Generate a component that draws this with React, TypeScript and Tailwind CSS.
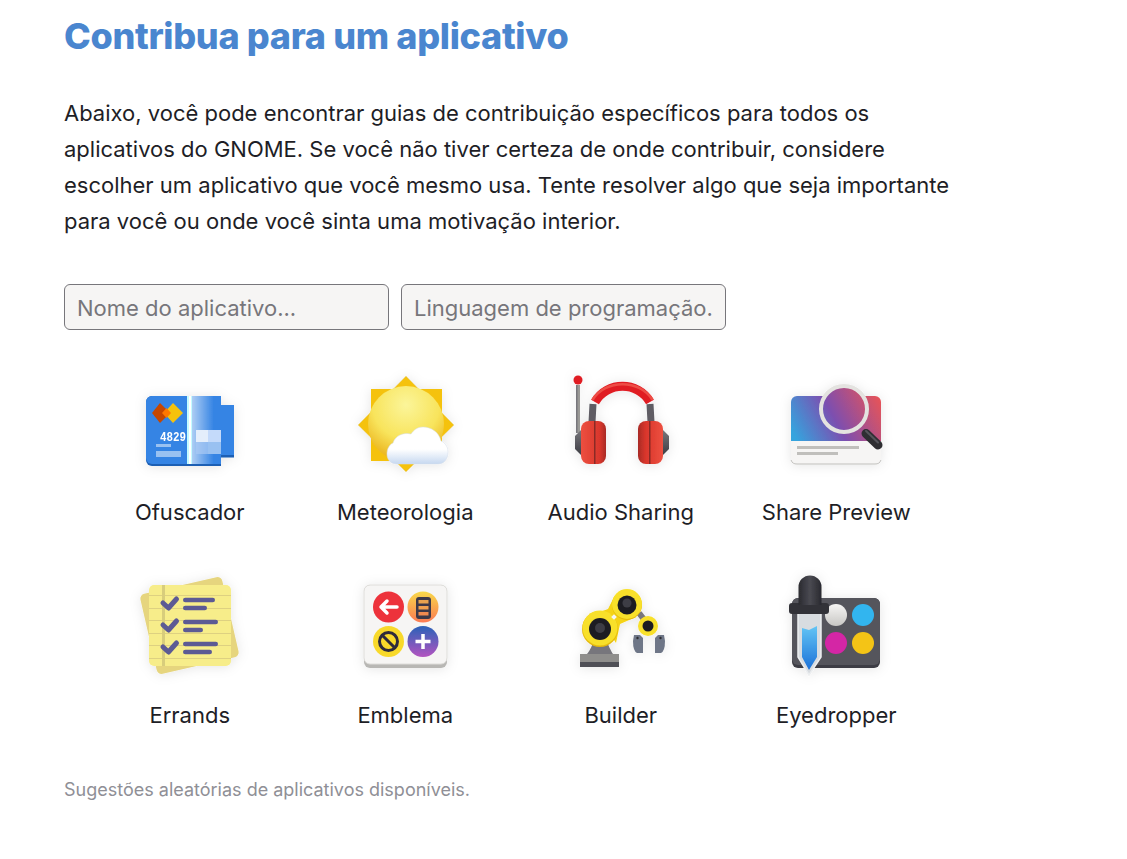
import React from "react";

const Soft = ({ children }: { children: React.ReactNode }) => (
  <svg width="120" height="120" viewBox="0 0 120 120" className="block">
    <defs>
      <filter id="soft" x="-30%" y="-30%" width="160%" height="160%">
        <feDropShadow dx="0" dy="1" stdDeviation="6" floodColor="#000" floodOpacity="0.10" />
      </filter>
      <linearGradient id="fade" x1="0" x2="1" y1="0" y2="0">
        <stop offset="0" stopColor="#fff" stopOpacity="0.6" />
        <stop offset="0.75" stopColor="#fff" stopOpacity="0" />
      </linearGradient>
      <radialGradient id="sun" cx="0.5" cy="0.25" r="0.8">
        <stop offset="0" stopColor="#fbf59a" />
        <stop offset="0.55" stopColor="#f8e45c" />
        <stop offset="1" stopColor="#e8a90f" />
      </radialGradient>
      <linearGradient id="cloud" x1="0" x2="0" y1="0" y2="1">
        <stop offset="0.6" stopColor="#ffffff" />
        <stop offset="1" stopColor="#c6d8f0" />
      </linearGradient>
      <linearGradient id="cup" x1="0" x2="1" y1="0" y2="0">
        <stop offset="0" stopColor="#ed5040" />
        <stop offset="0.75" stopColor="#d9362c" />
        <stop offset="1" stopColor="#a82a25" />
      </linearGradient>
      <linearGradient id="cup2" x1="0" x2="1" y1="0" y2="0">
        <stop offset="0" stopColor="#a82a25" />
        <stop offset="0.3" stopColor="#d9362c" />
        <stop offset="1" stopColor="#ed5040" />
      </linearGradient>
      <linearGradient id="steel" x1="0" x2="0" y1="0" y2="1">
        <stop offset="0" stopColor="#77767b" />
        <stop offset="1" stopColor="#3d3d44" />
      </linearGradient>
      <linearGradient id="preview" gradientUnits="userSpaceOnUse" x1="20" y1="75" x2="105" y2="30">
        <stop offset="0" stopColor="#35a4de" />
        <stop offset="0.45" stopColor="#7c4fb0" />
        <stop offset="1" stopColor="#ed5353" />
      </linearGradient>
      <linearGradient id="orangey" x1="0" x2="0" y1="0" y2="1">
        <stop offset="0" stopColor="#f8d84a" />
        <stop offset="1" stopColor="#fb7a52" />
      </linearGradient>
      <linearGradient id="bluepurple" x1="0" x2="0" y1="0" y2="1">
        <stop offset="0" stopColor="#2a62b8" />
        <stop offset="1" stopColor="#b354c0" />
      </linearGradient>
      <linearGradient id="drop" x1="0" x2="0" y1="0" y2="1">
        <stop offset="0" stopColor="#62c5f5" />
        <stop offset="1" stopColor="#1c71d8" />
      </linearGradient>
      <linearGradient id="bulb" x1="0" x2="1" y1="0" y2="0">
        <stop offset="0" stopColor="#2a2a30" />
        <stop offset="0.5" stopColor="#4a4a52" />
        <stop offset="1" stopColor="#28282e" />
      </linearGradient>
      <linearGradient id="white" x1="0" x2="0" y1="0" y2="1">
        <stop offset="0" stopColor="#f6f5f4" />
        <stop offset="1" stopColor="#c8c7c4" />
      </linearGradient>
    </defs>
    <g filter="url(#soft)">{children}</g>
  </svg>
);

const Ofuscador = () => (
  <Soft>
    <rect x="85" y="41" width="19" height="52" fill="#3584e4" />
    <rect x="85" y="91" width="19" height="2.500" fill="#1a5fb4" />
    <path d="M22 32H91V102H22a6 6 0 0 1-6-6V38a6 6 0 0 1 6-6Z" fill="#1a5fb4" />
    <path d="M22 32H91V100H22a6 6 0 0 1-6-6V38a6 6 0 0 1 6-6Z" fill="#3584e4" />
    <rect x="62" y="32" width="29" height="68" fill="url(#fade)" />
    <rect x="57" y="32" width="5" height="68" fill="#c5fbff" />
    <rect x="59" y="32" width="2" height="68" fill="#ffffff" />
    <path d="M30 39 40 49 30 59 22 49Z" fill="#c64600" />
    <path d="M43 39 53 49 43 59 34 49Z" fill="#f5c211" />
    <path d="M36.500 44 41 49 36.500 54 32 49Z" fill="#ff7800" />
    <text x="30" y="77" fill="#fff" fontSize="12" fontWeight="700" fontFamily="'Liberation Mono', monospace" textLength="26" lengthAdjust="spacingAndGlyphs">4829</text>
    <rect x="26" y="80" width="15" height="3" fill="#99c1f1" />
    <rect x="26" y="87" width="25" height="6" fill="#99c1f1" />
    <rect x="66" y="66" width="12" height="12" fill="#e4eefb" />
    <rect x="78" y="66" width="13" height="12" fill="#c4dafa" />
    <rect x="78" y="78" width="13" height="12" fill="#99c1f1" />
    <rect x="66" y="78" width="12" height="12" fill="#a9c9f3" opacity="0.7" />
  </Soft>
);

const Meteorologia = () => (
  <Soft>
    <rect x="26" y="25" width="71" height="72" fill="#f5c211" />
    <path d="M61 12 109 61 61 108 13 61Z" fill="#f5c211" stroke="#e5d9a0" strokeWidth="0.500" />
    <circle cx="61" cy="60" r="38" fill="url(#sun)" />
    <path d="M52 100H93C100 100 103 94 103 88 103 82 99 78 96 77 94 68 86 63 78 63 72 63 69 66 66 70 58 68 50 72 48 79 44 81 42 85 42 90 42 96 46 100 52 100Z" fill="url(#cloud)" stroke="#d4dde8" strokeWidth="0.500" />
  </Soft>
);

const AudioSharing = () => (
  <Soft>
    <rect x="15" y="21" width="4" height="48" fill="#9a9996" />
    <rect x="15" y="21" width="1.500" height="48" fill="#77767b" />
    <circle cx="17" cy="16" r="4.500" fill="#e01b24" />
    <path d="M14 72 20 66V91L14 85Z" fill="url(#steel)" />
    <path d="M102 66 108 72V85L102 91Z" fill="url(#steel)" />
    <path d="M32 40 31 58M89 40 90 58" fill="none" stroke="#5e5c64" strokeWidth="7" />
    <path d="M34 38C46 17 77 17 89 38" fill="none" stroke="#e01b24" strokeWidth="9" />
    <path d="M31.500 36C44 15 79 15 91.500 36" fill="none" stroke="#ed4d45" strokeWidth="2.500" />
    <rect x="20" y="57" width="25" height="43" rx="8" fill="url(#cup)" />
    <rect x="33" y="57" width="1.500" height="43" fill="#8a2a26" />
    <rect x="77" y="57" width="25" height="43" rx="8" fill="url(#cup2)" />
    <rect x="88" y="57" width="1.500" height="43" fill="#8a2a26" />
  </Soft>
);

const SharePreview = () => (
  <Soft>
    <path d="M21 32H99a6 6 0 0 1 6 6V77H15V38a6 6 0 0 1 6-6Z" fill="url(#preview)" />
    <path d="M15 77H105V94a6 6 0 0 1-6 6H21a6 6 0 0 1-6-6Z" fill="#f6f5f4" />
    <path d="M15 96a6 6 0 0 0 6 4H99a6 6 0 0 0 6-4" fill="none" stroke="#c0bfbc" strokeWidth="1" />
    <rect x="21" y="82" width="62" height="3" fill="#c0bfbc" />
    <rect x="21" y="88" width="41" height="3" fill="#c0bfbc" />
    <circle cx="68" cy="45" r="23" fill="url(#preview)" stroke="#e4e3e0" strokeWidth="4" />
    <path d="M90 69.500 102 81" stroke="#2e2e33" strokeWidth="9" strokeLinecap="round" />
    <path d="M90 67 102 78.500" stroke="#55555b" strokeWidth="2" strokeLinecap="round" />
  </Soft>
);

const Errands = () => {
  const rows = [
    { c: 37, y1: 33, y2: 41, a: 32, b: 24 },
    { c: 59, y1: 55, y2: 63, a: 35, b: 20 },
    { c: 81, y1: 77, y2: 85, a: 35, b: 29 },
  ];
  return (
    <Soft>
      <rect x="17.500" y="17.500" width="84" height="82" rx="5" fill="#e6d57e" transform="rotate(-13 59.500 58.500)" />
      <rect x="19" y="18" width="82" height="81" rx="5" fill="#f7ed8a" />
      {[28, 41, 53, 66, 78, 91].map((y) => (
        <rect key={y} x="19" y={y} width="82" height="1" fill="#ded181" />
      ))}
      <rect x="32" y="18" width="3" height="81" fill="#d8cd7c" />
      {rows.map((r) => (
        <g key={r.c}>
          <path d={`M33 ${r.c - 1}l5.500 5 8-9`} fill="none" stroke="#5b5a94" strokeWidth="5" strokeLinecap="round" strokeLinejoin="round" />
          <rect x="53" y={r.y1 - 2.250} width={r.a} height="4.500" rx="2.250" fill="#5b5a94" />
          <rect x="53" y={r.y2 - 2.250} width={r.b} height="4.500" rx="2.250" fill="#5b5a94" />
        </g>
      ))}
    </Soft>
  );
};

const Emblema = () => (
  <Soft>
    <rect x="19" y="18" width="83" height="83" rx="6" fill="#b8b7b4" />
    <rect x="19" y="18" width="83" height="79" rx="6" fill="#f6f5f4" stroke="#deddda" strokeWidth="1" />
    <circle cx="43.500" cy="40" r="15.500" fill="#ed333b" />
    <path d="M52 40H36M42 34l-6 6 6 6" fill="none" stroke="#fff" strokeWidth="3.500" strokeLinecap="round" strokeLinejoin="round" />
    <circle cx="78" cy="40" r="15.500" fill="url(#orangey)" />
    <rect x="71" y="30" width="15" height="22" rx="3" fill="#3d3846" />
    <rect x="73.500" y="33" width="10" height="3.500" fill="#e8a24f" />
    <rect x="73.500" y="39" width="10" height="3.500" fill="#f0a050" />
    <rect x="73.500" y="45" width="10" height="3.500" fill="#f08a50" />
    <circle cx="43.500" cy="74.500" r="15.500" fill="#f8d92c" />
    <circle cx="43.500" cy="74.500" r="9" fill="none" stroke="#2d2b3a" strokeWidth="3" />
    <path d="M37 68 50 81" stroke="#2d2b3a" strokeWidth="3" />
    <circle cx="78" cy="74.500" r="15.500" fill="url(#bluepurple)" />
    <path d="M78 67V82M70.500 74.500H85.500" stroke="#fff" strokeWidth="3.500" />
  </Soft>
);

const Builder = () => (
  <Soft>
    <path d="M26 87C30 82 31 78 33 74H46C47 78 50 84 52 87Z" fill="#77767b" />
    <rect x="19" y="87" width="39" height="8" fill="#8f8e8c" />
    <rect x="19" y="95" width="39" height="5" fill="#4f4f56" />
    <path d="M78 46 85 55" stroke="#77767b" strokeWidth="6" />
    <path d="M36 46 47 42 53 30 75 50 59 57 55 76Z" fill="#f5d313" />
    <circle cx="39" cy="62" r="18" fill="#e5b90e" />
    <circle cx="39" cy="61" r="17.500" fill="#f8e02a" />
    <circle cx="39" cy="62" r="11" fill="#1f1f24" />
    <circle cx="39" cy="61" r="5" fill="#3d3d44" />
    <circle cx="66" cy="38" r="15" fill="#e5b90e" />
    <circle cx="66" cy="37" r="15" fill="#f8e02a" />
    <circle cx="66" cy="38" r="9.500" fill="#1f1f24" />
    <circle cx="66" cy="36" r="4.500" fill="#3d3d44" />
    <rect x="51" y="48" width="4" height="4" fill="#f6f5f4" transform="rotate(45 53 50)" />
    <path d="M73 68h6l3 3v15h-6Q72 84 72 74Z" fill="#6e7687" />
    <path d="M103 68h-6l-3 3v15h6Q104 84 104 74Z" fill="#6e7687" />
    <circle cx="76.500" cy="71" r="1.200" fill="#2e2e33" />
    <circle cx="99.500" cy="71" r="1.200" fill="#2e2e33" />
    <circle cx="87" cy="59" r="10" fill="#f8e02a" />
    <circle cx="87" cy="59" r="5.500" fill="#1f1f24" />
  </Soft>
);

const Eyedropper = () => (
  <Soft>
    <rect x="16" y="31" width="88" height="70" rx="6" fill="#3d3d44" />
    <rect x="16" y="31" width="88" height="67" rx="6" fill="#55555c" />
    <circle cx="60" cy="48" r="11" fill="url(#white)" />
    <circle cx="87" cy="48" r="11" fill="#33b5ef" />
    <circle cx="60" cy="76" r="11" fill="#d425a5" />
    <circle cx="87" cy="76" r="11" fill="#f4c415" />
    <path d="M22 46H45V90L33 108 22 90Z" fill="#d8dce0" stroke="#eceef0" strokeWidth="1.500" />
    <path d="M26 61 33 63 41 59V90L33 103 26 90Z" fill="url(#drop)" />
    <rect x="13" y="36" width="40" height="11" rx="3" fill="#333339" />
    <path d="M22.500 38V20a11.500 11.500 0 0 1 23 0V38Z" fill="url(#bulb)" />
  </Soft>
);

const apps = [
  { name: "Ofuscador", Icon: Ofuscador },
  { name: "Meteorologia", Icon: Meteorologia },
  { name: "Audio Sharing", Icon: AudioSharing },
  { name: "Share Preview", Icon: SharePreview },
  { name: "Errands", Icon: Errands },
  { name: "Emblema", Icon: Emblema },
  { name: "Builder", Icon: Builder },
  { name: "Eyedropper", Icon: Eyedropper },
];

export default function App() {
  return (
    <div className="min-h-[859px] bg-white pl-16 font-['Inter','Liberation_Sans',sans-serif] text-[#1e1e26] overflow-hidden">
      <h1 className="h-[72px] text-[36px] leading-[72px] font-extrabold tracking-[-0.32px] text-[#4a86cf]">
        Contribua para um aplicativo
      </h1>
      <p className="mt-[23px] w-[900px] text-[22px] leading-[36px]">
        Abaixo, você pode encontrar guias de contribuição específicos para todos os
        <br />
        aplicativos do GNOME. Se você não tiver certeza de onde contribuir, considere
        <br />
        escolher um aplicativo que você mesmo usa. Tente resolver algo que seja importante
        <br />
        para você ou onde você sinta uma motivação interior.
      </p>
      <div className="mt-[45px] flex gap-3">
        <input
          placeholder="Nome do aplicativo..."
          className="h-[46px] w-[325px] rounded-md border border-[#77767b] bg-[#f6f5f4] px-3 pt-[1px] text-[22px] placeholder:text-[#77767b] outline-none"
        />
        <input
          placeholder="Linguagem de programação..."
          className="h-[46px] w-[325px] rounded-md border border-[#77767b] bg-[#f6f5f4] px-3 pt-[1px] text-[22px] placeholder:text-[#77767b] outline-none"
        />
      </div>
      <div className="mt-[34px] ml-[18px] grid w-[862px] grid-cols-4 gap-y-[23px]">
        {apps.map(({ name, Icon }) => (
          <div key={name} className="flex flex-col items-center">
            <Icon />
            <div className="mt-[11px] h-[49px] -translate-y-[2px] text-[22px] leading-[38px] text-[#1e1e26]">{name}</div>
          </div>
        ))}
      </div>
      <p className="mt-[31px] text-[18px] leading-6 text-[#8f8f96]">
        Sugestões aleatórias de aplicativos disponíveis.
      </p>
    </div>
  );
}
